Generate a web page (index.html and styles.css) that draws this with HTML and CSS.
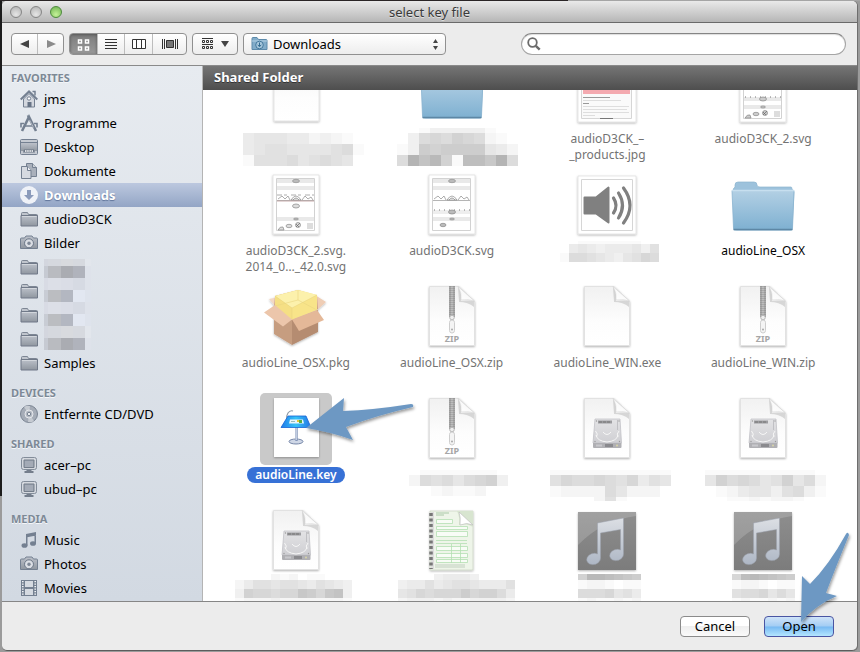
FILE: index.html
```html
<!DOCTYPE html>
<html lang="en">
<head>
<meta charset="utf-8">
<title>select key file</title>
<link rel="stylesheet" href="styles.css">
</head>
<body>
<svg class="defs" aria-hidden="true">
  <defs>
    <linearGradient id="g-page" x1="0" y1="0" x2="0" y2="1"><stop offset="0" stop-color="#f1f1f1"/><stop offset=".6" stop-color="#fdfdfd"/><stop offset="1" stop-color="#fff"/></linearGradient>
    <linearGradient id="g-fold" x1="0" y1="1" x2="1" y2="0"><stop offset="0" stop-color="#fff"/><stop offset=".45" stop-color="#fafafa"/><stop offset="1" stop-color="#ddd"/></linearGradient>
    <linearGradient id="g-folder" x1="0" y1="0" x2="0" y2="1"><stop offset="0" stop-color="#b3d0e4"/><stop offset="1" stop-color="#7eb0d1"/></linearGradient>
    <linearGradient id="g-side" x1="0" y1="0" x2="0" y2="1"><stop offset="0" stop-color="#bcc1ca"/><stop offset="1" stop-color="#8f969f"/></linearGradient>
    <linearGradient id="g-music" x1="0" y1="0" x2="0" y2="1"><stop offset="0" stop-color="#8e8e8e"/><stop offset="1" stop-color="#7c7c7c"/></linearGradient>
    <linearGradient id="g-note" x1="0" y1="0" x2="0" y2="1"><stop offset="0" stop-color="#dcdfe4"/><stop offset="1" stop-color="#aeb7c5"/></linearGradient>
    <linearGradient id="g-drive" x1="0" y1="0" x2="0" y2="1"><stop offset="0" stop-color="#e3e3e5"/><stop offset="1" stop-color="#cfcfd3"/></linearGradient>
    <linearGradient id="g-podium" x1="0" y1="0" x2="1" y2="0"><stop offset="0" stop-color="#1f7bea"/><stop offset=".5" stop-color="#35c3f8"/><stop offset="1" stop-color="#2274e4"/></linearGradient>
    <filter id="shadow" x="-20%" y="-20%" width="140%" height="150%"><feDropShadow dx="0" dy="1" stdDeviation="1" flood-opacity=".3"/></filter>
    <filter id="arrow-shadow" x="-20%" y="-20%" width="140%" height="150%"><feDropShadow dx="1" dy="2" stdDeviation="1.5" flood-opacity=".4"/></filter>
  </defs>

  <symbol id="page" viewBox="0 0 72 72">
    <path d="M13.500 5.500H43L58.500 20V64.500H13.500Z" fill="url(#g-page)" stroke="#e2e2e2" filter="url(#shadow)"/>
    <path d="M42 6q4 6 3 14 8-1 13 0v6q-6-5-15-5Z" fill="#000" opacity=".13"/>
    <path d="M42 5.500q4 6 3 13.500 8-1 13.500 1Z" fill="url(#g-fold)" stroke="#d2d2d2" stroke-width=".6"/>
  </symbol>
  <symbol id="zip" viewBox="0 0 72 72">
    <use href="#page"/>
    <path d="M33 5h6v31h-6Z" fill="#a9a9a9"/>
    <path d="M34 5v31M38 5v31" stroke="#8c8c8c" stroke-dasharray="1 1"/>
    <path d="M36 6v30" stroke="#d0d0d0" stroke-dasharray="1 1"/>
    <circle cx="36" cy="36.500" r="2.300" fill="#eee" stroke="#b4b4b4"/>
    <rect x="33.500" y="39" width="5" height="13" rx="2.500" fill="#f4f4f4" stroke="#cdcdcd"/>
    <circle cx="36" cy="48.500" r="1" fill="#aaa"/>
  </symbol>
  <symbol id="drive" viewBox="0 0 72 72">
    <use href="#page"/>
    <path d="M24 26h25l1.500 24H22Z" fill="url(#g-drive)" stroke="#c2c2c6" stroke-width=".8"/>
    <path d="M22 50h28.500v4q0 1-1 1h-26.500q-1 0-1-1Z" fill="#b0b0b4"/>
    <rect x="27" y="27.500" width="14" height="3" fill="#9c9c9f"/><path d="M28 29h12" stroke="#777" stroke-dasharray="3 1"/>
    <path d="M25 42q1 6 11 7 10-1 11-7M24.500 38q3 3 1 6M48 38q-3 3-1 6M32 39q4 5 8 0" fill="none" stroke="#f6f6f6" stroke-width="1"/>
    <path d="M46.500 27v10" stroke="#c0c0c4"/>
    <path d="M25 51.500h6v2h-6Z" fill="#c8c8cc"/><path d="M34 51h8v3h-8Z" fill="#8a8a8e"/><circle cx="46" cy="52.500" r="1" fill="#d8d5a8"/>
    <g fill="#999"><circle cx="25.500" cy="28" r=".7"/><circle cx="48" cy="28" r=".7"/><circle cx="24" cy="48.500" r=".7"/><circle cx="48.500" cy="48.500" r=".7"/></g>
  </symbol>
  <symbol id="folder" viewBox="0 0 72 72">
    <path d="M7 61V22Q5 20 8 18V16q0-3 3-3h16q3 0 3 3 0 2 3 2h31q1 0 1 2l2 3-2 38Z" fill="#9dc2dc" stroke="#8db4cf" stroke-width=".7"/>
    <path d="M5 21.500h62L65.500 59q0 2-2 2h-54q-3 0-3-2Z" fill="url(#g-folder)" stroke="#8ab4d0" stroke-width=".8"/>
    <path d="M5 21.500h62" stroke="#c7dfef" stroke-width="1.500"/>
    <path d="M6.500 60.500h59" stroke="#5d87a5" stroke-width="1.500"/>
  </symbol>
  <symbol id="sheet" viewBox="0 0 72 72">
    <path d="M13 6h46v59H13Z" fill="#fff" stroke="#ddd" stroke-width=".7" filter="url(#shadow)"/>
    <path d="M16.500 9.500h38v52h-38Z" fill="#fff" stroke="#d2d2d2"/>
    <path d="M17 10h37v4H17ZM17 17h37v4H17ZM17 48h37v4H17Z" fill="#e9e9e9"/>
    <g fill="#bbb" stroke="#888" stroke-width=".6"><ellipse cx="36" cy="12" rx="3.500" ry="1.700"/><ellipse cx="36" cy="50" rx="2.500" ry="1"/></g>
    <path d="M17 31.500h37" stroke="#b5b5b5"/>
    <path d="M18 30l4-3 3 3 3-3 2 4M31 31q5-8 10 0ZM42 31l3-4 3 3 3-2 2 3" fill="none" stroke="#8a8a8a" stroke-width=".7"/>
    <path d="M33 31q3-4 6 0" stroke="#999" fill="none"/>
  </symbol>
  <symbol id="sheet-a" viewBox="0 0 72 72">
    <use href="#sheet"/>
    <path d="M17 26h37" stroke="#999" stroke-width=".8" stroke-dasharray="5 2 3 4"/><path d="M17 32h37" stroke="#b99" stroke-width=".8"/>
    <g fill="#ddd" stroke="#888" stroke-width=".7"><ellipse cx="36" cy="37" rx="3.500" ry="2"/><ellipse cx="29" cy="57" rx="3" ry="1.700"/><circle cx="38" cy="56" r="2.500"/><path d="M18 61q2-4 5-3l1 3Z"/></g>
    <path d="m36 58 4-4M36 55l3 3" stroke="#666" stroke-width=".7"/><path d="M47 54h6v6h-6Z" fill="#ddd"/>
  </symbol>
  <symbol id="sheet-b" viewBox="0 0 72 72">
    <use href="#sheet"/>
    <path d="M17 41h37v4H17Z" fill="#eee"/><path d="M18 41h36" stroke="#777" stroke-dasharray="1 4"/>
    <g fill="#bbb" stroke="#888" stroke-width=".7"><ellipse cx="36" cy="43" rx="3.500" ry="2"/><ellipse cx="27" cy="56" rx="3" ry="1.700"/></g>
  </symbol>
  <symbol id="sheet-c" viewBox="0 0 72 72">
    <path d="M13 6h46v59H13Z" fill="#fff" stroke="#ddd" stroke-width=".7" filter="url(#shadow)"/>
    <path d="M16.500 9.500h38v52h-38Z" fill="#fff" stroke="#d2d2d2"/>
    <path d="M17 40h37v4H17ZM17 48h37v4H17Z" fill="#e9e9e9"/><path d="M18 40h36" stroke="#777" stroke-dasharray="1 4"/>
    <g fill="#ccc" stroke="#888" stroke-width=".7"><ellipse cx="36" cy="42" rx="3.500" ry="2"/><ellipse cx="36" cy="50" rx="2.500" ry="1"/><ellipse cx="29" cy="57" rx="3" ry="1.700"/><circle cx="38" cy="56" r="2.500"/><path d="M18 61q2-4 5-3l1 3Z"/></g>
    <path d="m36 58 4-4M36 55l3 3" stroke="#666" stroke-width=".7"/><path d="M47 54h6v6h-6Z" fill="#ddd"/>
  </symbol>
  <symbol id="music" viewBox="0 0 72 72">
    <path d="M7 7h58v58H7Z" fill="url(#g-music)" filter="url(#shadow)"/>
    <path d="M7 7h58v4Q30 16 7 40Z" fill="#fff" opacity=".17"/>
    <path d="M26.500 18 52.500 13v36a7 5.500 -15 1 1-3-4V24.500L29.500 28v25a7 5.500 -15 1 1-3-4Z" fill="url(#g-note)" stroke="#9aa1ac" stroke-width=".5"/>
  </symbol>

  <symbol id="s-folder" viewBox="0 0 18 18"><path d="M1.500 15.500v-12q0-1 1-1h5l1 2h8q1 0 1 1v10Z" fill="#c0c5cd" stroke="#7d8694"/><path d="M1 5.500h16.500v10.500H1Z" fill="url(#g-side)" stroke="#707988"/><path d="M2 6.500h14.500" stroke="#d2d6dc"/></symbol>
  <symbol id="s-camera" viewBox="0 0 18 18"><path d="M.5 5q0-1 1-1h3L6 2h6l1.500 2h3q1 0 1 1v9.500h-17Z" fill="url(#g-side)" stroke="#748091"/><circle cx="9" cy="9.300" r="4.500" fill="#d8dce3" stroke="#6c7787"/><circle cx="9" cy="9.300" r="2.200" fill="#7d8796" stroke="#fff" stroke-width=".6"/></symbol>
  <symbol id="s-pc" viewBox="0 0 18 18"><rect x="1.500" y="1.500" width="15" height="12" rx="2" fill="#d4d8de" stroke="#828c99"/><path d="M4 4h10v7.500H4Z" fill="#98a0ac" stroke="#747e8b"/><path d="M5 6h8M5 8h8M5 10h8" stroke="#b9bfc8" stroke-width=".7"/><path d="M7 14h4l1 1h1.500v2h-9v-2H6Z" fill="#747e8c"/></symbol>
</svg>

<div class="window">
  <header class="titlebar">
    <div class="lights">
      <button class="light" type="button" aria-label="Close"></button>
      <button class="light" type="button" aria-label="Minimize"></button>
      <button class="light light-zoom" type="button" aria-label="Zoom"></button>
    </div>
    <h1 class="title">select key file</h1>
  </header>

  <div class="toolbar">
    <div class="group nav-group">
      <button type="button" aria-label="Back"><svg width="10" height="10"><path d="M9 1v8L0 5Z" fill="#444"/></svg></button>
      <button type="button" aria-label="Forward"><svg width="10" height="10"><path d="M1 1v8l9-4Z" fill="#8b8b8b"/></svg></button>
    </div>
    <div class="group view-group">
      <button class="active" type="button" aria-label="Icons"><svg width="13" height="13" fill="none" stroke="#fff" stroke-width="1.500"><path d="M1.500 2h3v3h-3ZM8.500 2h3v3h-3ZM1.500 9h3v3h-3ZM8.500 9h3v3h-3Z"/></svg></button>
      <button type="button" aria-label="List"><svg width="12" height="12" stroke="#333"><path d="M0 1.500h12M0 4.500h12M0 7.500h12M0 10.500h12"/></svg></button>
      <button type="button" aria-label="Columns"><svg width="14" height="12" fill="#fff" stroke="#333"><path d="M.5 1.500h13v9H.5ZM4.500 1v10M9.500 1v10"/></svg></button>
      <button class="wide" type="button" aria-label="Cover flow"><svg width="16" height="12" stroke="#333"><path d="M.5 1v10M2.500 1v10M13.500 1v10M15.500 1v10"/><path d="M4.500 2.500h7v7h-7Z" fill="#777"/></svg></button>
    </div>
    <button class="group action" type="button" aria-label="Arrange"><svg width="12" height="12" fill="none" stroke="#333"><path d="M.5 2.500h2v2h-2ZM4.500 2.500h2v2h-2ZM8.500 2.500h2v2h-2ZM.5 8.500h2v2h-2ZM4.500 8.500h2v2h-2ZM8.500 8.500h2v2h-2ZM0 .5h11M0 6.500h11"/></svg><svg width="8" height="6"><path d="M0 0h8L4 6Z" fill="#444"/></svg></button>
    <div class="group location">
      <svg width="17" height="16" aria-hidden="true"><path d="M1 13.500v-11q0-1 1-1h4l1.500 2H15q1 0 1 1v9Z" fill="#82acc9" stroke="#5c8aab"/><path d="M1 5h15" stroke="#b5d2e5"/><circle cx="8.500" cy="9" r="3.800" fill="#a8c8dd" stroke="#44789c"/><path d="M8.500 6.500v3.500M6.800 8.800l1.700 2 1.700-2" stroke="#326b91" fill="none"/></svg>
      <select aria-label="Location"><option>Downloads</option></select>
      <svg class="stepper" width="5" height="11" aria-hidden="true"><path d="M2.500 0 5 4H0ZM0 7h5l-2.500 4Z" fill="#444"/></svg>
    </div>
    <label class="search">
      <svg width="14" height="14" fill="none" stroke="#6b6b6b" aria-hidden="true"><circle cx="5.500" cy="5.500" r="4.300" stroke-width="1.800"/><path d="m8.800 8.800 3.900 3.900" stroke-width="2.400"/></svg>
      <input type="search" aria-label="Search">
    </label>
  </div>

  <div class="main">
    <nav class="sidebar" aria-label="Places">
      <h2>FAVORITES</h2>
      <ul>
        <li><a href="#"><svg viewBox="0 0 18 18"><path d="M3.500 9v8h11V9L9 3.500Z" fill="#d3d7de" stroke="#748091"/><path d="M.7 9.500 9 1.500l8.300 8" fill="none" stroke="#748091" stroke-width="2"/><path d="M12.500 1.500h2.500v4" fill="none" stroke="#748091" stroke-width="1.500"/><path d="M7.500 12h4v5h-4Z" fill="#667385"/><circle cx="9" cy="8.500" r="1.700" fill="#fff" stroke="#748091"/></svg>jms</a></li>
        <li><a href="#"><svg viewBox="0 0 18 18" fill="none" stroke="#748091"><path d="m2 17 7-14 7 14" stroke-width="2.600"/><path d="M1 13.500V9.500h3M17 13.500V9.500h-3M5 12h8" stroke-width="1.600"/><path d="M7.500 1.500 14 14" stroke-width="1.600"/><path d="m9.500 6 4 7.500" stroke="#b4bac4" stroke-width="1"/></svg>Programme</a></li>
        <li><a href="#"><svg viewBox="0 0 18 18"><rect x=".5" y="1.500" width="17" height="15" rx="1" fill="#c5cad2" stroke="#748091"/><path d="M1 4.500h16" stroke="#748091"/><path d="M1 5h16v8H1Z" fill="url(#g-side)"/><path d="M3 14.500 4 11.500h10l1 3Z" fill="#6c7786"/><path d="M5 13h8" stroke="#fff" stroke-width="1.500" stroke-dasharray="1.500 .7"/></svg>Desktop</a></li>
        <li><a href="#"><svg viewBox="0 0 18 18" stroke="#748091"><path d="M6.500 1.500h6l4 4v9h-10Z" fill="#a9b0bb"/><path d="M12.500 1.500v4h4" fill="#ccd1d8"/><path d="M1.500 4.500h6l3.500 4v8h-9.500Z" fill="#d6dae1"/><path d="M7.500 4.500v4h3.500" fill="#eef0f3"/></svg>Dokumente</a></li>
        <li><a class="current" href="#" aria-current="page"><svg viewBox="0 0 18 18"><circle cx="9" cy="9" r="9" fill="#eff2f8"/><path d="M7 4h4v5h3l-5 5-5-5h3Z" fill="#8b9bbb"/></svg>Downloads</a></li>
        <li><a href="#"><svg><use href="#s-folder"/></svg>audioD3CK</a></li>
        <li><a href="#"><svg><use href="#s-camera"/></svg>Bilder</a></li>
        <li><a href="#" aria-label="Folder"><svg><use href="#s-folder"/></svg><svg class="mosaic-side" data-place="0 4"></svg></a></li>
        <li><a href="#" aria-label="Folder"><svg><use href="#s-folder"/></svg><svg class="mosaic-side" data-place="1 -1"></svg></a></li>
        <li><a href="#" aria-label="Folder"><svg><use href="#s-folder"/></svg><svg class="mosaic-side" data-place="1 -1"></svg></a></li>
        <li><a href="#" aria-label="Folder"><svg><use href="#s-folder"/></svg><svg class="mosaic-side" data-place="0 -1"></svg></a></li>
        <li><a href="#"><svg><use href="#s-folder"/></svg>Samples</a></li>
      </ul>
      <h2>DEVICES</h2>
      <ul>
        <li><a href="#"><svg viewBox="0 0 18 18"><circle cx="9" cy="9" r="8.500" fill="#a5acb7" stroke="#7a8492"/><path d="M9 9 4 2a8 8 0 0 1 6-1ZM9 9l5 7a8 8 0 0 1-6 1Z" fill="#c6cbd2"/><circle cx="9" cy="9" r="4" fill="#b5bbc4" stroke="#e6e8ec"/><circle cx="9" cy="9" r="1.700" fill="#e8ebef" stroke="#7a8492"/></svg>Entfernte CD/DVD</a></li>
      </ul>
      <h2>SHARED</h2>
      <ul>
        <li><a href="#"><svg><use href="#s-pc"/></svg>acer–pc</a></li>
        <li><a href="#"><svg><use href="#s-pc"/></svg>ubud–pc</a></li>
      </ul>
      <h2>MEDIA</h2>
      <ul>
        <li><a href="#"><svg viewBox="0 0 18 18" fill="#748091"><path d="M6 3 16 1v3.500L6 6.500ZM6 3h1.500v11.500H6ZM14.500 2H16v10.500h-1.500Z"/><ellipse cx="4.500" cy="14.500" rx="3" ry="2.300"/><ellipse cx="13" cy="12.500" rx="3" ry="2.300"/></svg>Music</a></li>
        <li><a href="#"><svg><use href="#s-camera"/></svg>Photos</a></li>
        <li><a href="#"><svg viewBox="0 0 18 18"><path d="M1 1h16v16H1Z" fill="#748091"/><path d="M5 2h8v6H5ZM5 10h8v6H5Z" fill="#d5dae1"/><path d="M2.800 2v15M15.200 2v15" stroke="#f2f4f7" stroke-width="1.600" stroke-dasharray="1.300 1.200"/></svg>Movies</a></li>
      </ul>
    </nav>

    <section class="browser">
      <h2 class="folder-bar">Shared Folder</h2>
      <div class="scroller">
        <ul class="files">
          <li><svg class="icon" viewBox="0 0 72 72"><path d="M14 5h45v59H14Z" fill="url(#g-page)" stroke="#ddd" stroke-width=".7" filter="url(#shadow)"/></svg><svg class="mosaic" data-mosaic="25 -3 11 5 ...fffff...|25 2 11 11 baaabbdcde/ba99aaaa98e/e9998a989a"></svg></li>
          <li><svg class="icon"><use href="#folder"/></svg><svg class="mosaic" data-mosaic="23 -3 11 5 ..eccccce..|23 2 11 11 .c878678de./ec565555abd/80316e22408"></svg></li>
          <li><svg class="icon" viewBox="0 0 72 72"><path d="M7 7h58v58H7Z" fill="#fff" stroke="#ddd" stroke-width=".7" filter="url(#shadow)"/><path d="M10.500 9.500h50v52h-50Z" fill="#fafafa" stroke="#d6d6d6"/><path d="M12 11h47v26H12Z" fill="#f4aab0"/><path d="M12 40.500h27M12 46.500h6" stroke="#999"/><path d="M12 43.500h38M12 49.500h46M12 52.500h44M12 55.500h46M12 58.500h12" stroke="#dedede"/><path d="M29 61.500h13" stroke="#777"/></svg><span class="name">audioD3CK_–<br>_products.jpg</span></li>
          <li><svg class="icon"><use href="#sheet-c"/></svg><span class="name">audioD3CK_2.svg</span></li>

          <li><svg class="icon"><use href="#sheet-a"/></svg><span class="name">audioD3CK_2.svg.<br>2014_0…_42.0.svg</span></li>
          <li><svg class="icon"><use href="#sheet-b"/></svg><span class="name">audioD3CK.svg</span></li>
          <li><svg class="icon" viewBox="0 0 72 72"><path d="M7 7h58v58H7Z" fill="#fff" stroke="#ddd" stroke-width=".7" filter="url(#shadow)"/><path d="M10.500 10.500h51v51h-51Z" fill="#fff" stroke="#d6d6d6"/><path d="M13.500 28.500H25L37.500 18.500v35L25 44.500H13.500Z" fill="#808080" stroke="#808080" stroke-width="2" stroke-linejoin="round"/><path d="M42.500 29q5 7.500 0 15M47.500 24q8 12.500 0 25M52.500 19q13 17.500 0 35" fill="none" stroke="#808080" stroke-width="3.200" stroke-linecap="round"/></svg><svg class="mosaic" data-mosaic="31 -2 9 3 ..eeeeeee..|31 1 9 9 .babcbbbac9/e889abca978"></svg></li>
          <li class="open"><svg class="icon"><use href="#folder"/></svg><span class="name">audioLine_OSX</span></li>

          <li><svg class="icon" viewBox="0 0 72 72"><g filter="url(#shadow)"><path d="M9 18 24 15 15 25Z" fill="#f3d8c4"/><path d="m55 14 11 7-9 8Z" fill="#efcdb5"/><path d="M14 26 32 38 58 28 57 15 38 9 15 15Z" fill="#cda386"/><path d="M14 28 32 39v25L14 53Z" fill="#c69d80"/><path d="M32 39 58 29v22L32 64Z" fill="#b58c71"/></g><path d="M15 15 38 9l19 5v15L32 39 15 25Z" fill="#f8e489"/><path d="M15 15 38 9l19 5-25 13Z" fill="#fcf1ac"/><path d="M32 27v12L15 25V15Z" fill="#f5df84"/><path d="M15 25 38 19l19 10M38 9v10M32 27v12M15 15l17 12 25-13" fill="none" stroke="#ead57f" stroke-width=".6"/><path d="m15 24 17 14.500-9 7L4 31.500Z" fill="#ecc6ab"/><path d="m32 38.500 25-9.500 7 10-25 11Z" fill="#e4b898"/></svg><span class="name">audioLine_OSX.pkg</span></li>
          <li><svg class="icon" viewBox="0 0 72 72"><use href="#zip"/><text class="zip-text" x="36" y="61">ZIP</text></svg><span class="name">audioLine_OSX.zip</span></li>
          <li><svg class="icon"><use href="#page"/></svg><span class="name">audioLine_WIN.exe</span></li>
          <li><svg class="icon" viewBox="0 0 72 72"><use href="#zip"/><text class="zip-text" x="36" y="61">ZIP</text></svg><span class="name">audioLine_WIN.zip</span></li>

          <li class="selected" aria-current="true">
            <div class="frame">
              <svg class="icon" viewBox="0 0 72 72"><path d="M14 5h45v59H14Z" fill="#fff" filter="url(#shadow)"/><path d="M27 26q-1-3 1-6 2-3 5-2" fill="none" stroke="#8d98a5" stroke-width="1.200"/><ellipse cx="36" cy="48.500" rx="7" ry="2.500" fill="#cfd7e6" stroke="#7687a8"/><path d="M36.500 34v14" stroke="#8395b8" stroke-width="2.400"/><path d="M36.200 34v13" stroke="#e0e7f4"/><path d="M28 23h18l5 11.500H21Z" fill="url(#g-podium)" stroke="#1563d4" stroke-width=".8"/><path d="M30 26.500h13l1 4H29Z" fill="#e6f5fc"/><path d="M31 28.500h4" stroke="#9bb"/><path d="M37 27h2v2h-2Z" fill="#e8c834"/><path d="M39 27h3v3h-3Z" fill="#54ad48"/></svg>
              <svg class="arrow arrow-key" viewBox="0 0 112 60" aria-hidden="true"><path d="M5 30 43 0 42 13Q72 12 110 6q3 0 2 3Q77 17 45 29l7 13Q30 34 5 30Z" fill="#6d98c3" filter="url(#arrow-shadow)"/></svg>
            </div>
            <span class="name">audioLine.key</span>
          </li>
          <li><svg class="icon" viewBox="0 0 72 72"><use href="#zip"/><text class="zip-text" x="36" y="61">ZIP</text></svg><svg class="mosaic" data-mosaic="35 3 11 5 .eeeeeee.|35 8 11 11 d898a876c|35 19 11 10 .fedeedf."></svg></li>
          <li><svg class="icon"><use href="#drive"/></svg><svg class="mosaic" data-mosaic="21 3 11 5 eeeeeeeeeee|21 8 11 11 97887897b9a/edddd8adddf|21 30 11 4 ....d9e...."></svg></li>
          <li><svg class="icon"><use href="#drive"/></svg><svg class="mosaic" data-mosaic="20 3 11 5 eeeeeeeeee.|20 8 11 11 a6878a96a8d/.edbaac98ce|20 30 11 4 ..eededde.."></svg></li>

          <li><svg class="icon"><use href="#drive"/></svg><svg class="mosaic" data-mosaic="17 -5 9 6 ....ded.ee...|17 1 9 9 db99a99ab9abc/c67787745743c|17 19 9 3 edddcddddddde"></svg></li>
          <li><svg class="icon" viewBox="0 0 72 72"><path d="M14 6h43v59H14Z" fill="#eef5e9" stroke="#c9d2c3" stroke-width=".7" filter="url(#shadow)"/><path d="M15 7h3v57h-3Z" fill="#ddd"/><path d="M15 8v56" stroke="#777" stroke-width="3.500" stroke-dasharray="3 2.500"/><path d="M20 8h13M20 10h8" stroke="#a9c8a7"/><g fill="#f8fcf6" stroke="#b4dfb2" stroke-width=".8"><path d="M20.500 14.500h16v4h-16ZM20.500 21.500h31v3h-31ZM20.500 26.500h31v5h-31ZM20.500 41.500h31v4h-31ZM20.500 48.500h31v4h-31ZM20.500 54.500h31v3h-31ZM35.500 39v19M44.500 39v19M20 35.500h31M20 38.500h31"/></g><path d="M19 60h30M19 62h30" stroke="#c1cfbf"/><path d="M44 7h9v3h-9Z" fill="#9ed89b"/><path d="M41 6q3 6 2 14 8-2 14 2V6Z" fill="#d8e5d0"/><path d="M43 7q2 6 1 13 7-3 13 0Z" fill="#fff" stroke="#bbb" stroke-width=".6"/></svg><svg class="mosaic" data-mosaic="24 -5 9 6 ....cbbbc....|24 1 9 9 cbb9ba99abbb9/a97877757668b|24 19 9 3 dcccdcddccccd"></svg></li>
          <li><svg class="icon"><use href="#music"/></svg><svg class="mosaic" data-mosaic="49 -5 9 6 6112345|49 1 9 9 eddefee/8887a9b|49 19 9 3 edeeded"></svg></li>
          <li><svg class="icon"><use href="#music"/></svg><svg class="mosaic" data-mosaic="47 -5 9 6 7212345|47 1 9 9 eddefee/9887a8a|47 19 9 3 edeeded"></svg></li>
        </ul>
      </div>
    </section>
  </div>

  <footer class="footer">
    <button class="push" type="button">Cancel</button>
    <div class="frame">
      <button class="push default" type="button">Open</button>
      <svg class="arrow arrow-open" viewBox="0 0 60 96" aria-hidden="true"><path d="M6 91 7 45l8 8Q34 34 51 3q2-3 3 1Q40 38 31 62l11 3Q22 73 6 91Z" fill="#6d98c3" filter="url(#arrow-shadow)"/></svg>
    </div>
  </footer>
</div>
<script src="mosaic.js"></script>
</body>
</html>
```
FILE: styles.css
```css
* { box-sizing: border-box; }

body {
  margin: 0;
  height: 100vh;
  padding: 1px 3px 1px 2px;
  background:
    linear-gradient(90deg, #2a2526 66%, #a5a5a5 66%) top / 100% 1px no-repeat,
    linear-gradient(#1c1c1c 76%, #9b9b9b 76%) left / 2px 100% no-repeat,
    #9b9b9b;
  font-family: "Noto Sans", "Open Sans", sans-serif;
  font-size: 13px;
  color: #000;
  overflow: hidden;
}

h1, h2, ul { margin: 0; padding: 0; font-weight: normal; list-style: none; }
button, input, select { font: inherit; color: inherit; margin: 0; padding: 0; border: 0; background: none; }
svg { display: block; flex: none; }
.defs { position: absolute; width: 0; height: 0; }

.window {
  display: flex;
  flex-direction: column;
  height: 100%;
  background: #ececec;
  border-radius: 5px;
  border-bottom: 1px solid #5c5c5c;
  box-shadow: 1px 0 #6e6e6e;
  overflow: hidden;
}

.titlebar {
  display: grid;
  grid-template-columns: 1fr auto 1fr;
  align-items: center;
  height: 22px;
  flex: none;
  padding: 0 8px;
  background: linear-gradient(#e9e9e9, #b6b6b6);
  border-bottom: 1px solid #6a6a6a;
}
.lights { display: flex; gap: 8px; }
.light {
  width: 12px;
  height: 12px;
  border: 1px solid #858585;
  border-radius: 50%;
  background: radial-gradient(circle at 50% 75%, #e6e6e6, #b0b0b0);
}
.light-zoom { border-color: #4d8a3c; background: radial-gradient(circle at 50% 75%, #c5f298, #6cb24f); }
.title { font-size: 13px; line-height: 20px; color: #3a3a3a; text-shadow: 0 1px rgba(255, 255, 255, .5); }

.toolbar {
  display: flex;
  align-items: flex-start;
  gap: 5px;
  height: 43px;
  flex: none;
  padding: 10px 11px 0 9px;
  border-bottom: 1px solid #8a8a8a;
}
.group {
  display: flex;
  align-items: center;
  height: 22px;
  border: 1px solid #909090;
  border-radius: 4px;
  background: linear-gradient(#fff, #ededed);
  overflow: hidden;
}
.group button { display: flex; align-items: center; justify-content: center; flex: 1; height: 20px; }
.group button + button { border-left: 1px solid #bdbdbd; }
.nav-group { width: 53px; }
.view-group { width: 118px; }
.view-group .wide { flex: none; width: 34px; }
.view-group .active { background: linear-gradient(#7c7c7c, #999); box-shadow: inset 0 1px 3px #555; }
.action { width: 46px; justify-content: center; gap: 7px; }
.location { width: 203px; padding: 0 7px; gap: 5px; }
.location select { flex: 1; min-width: 0; height: 20px; appearance: none; outline: none; }
.search {
  display: flex;
  align-items: center;
  gap: 5px;
  width: 325px;
  height: 22px;
  margin-left: auto;
  padding: 0 10px 0 5px;
  border: 1px solid #a5a5a5;
  border-top-color: #858585;
  border-radius: 11px;
  background: #fff;
  box-shadow: inset 0 1px 1px #ddd;
}
.search input { flex: 1; min-width: 0; height: 18px; outline: none; appearance: none; }

.main { display: flex; flex: 1; min-height: 0; }

.sidebar {
  width: 201px;
  flex: none;
  overflow: hidden;
  padding-top: 3px;
  border-right: 1px solid #b4b4b4;
  background: linear-gradient(#e7ebf0, #d2d9e2);
}
.sidebar h2 {
  padding-left: 9px;
  font-size: 11px;
  font-weight: bold;
  line-height: 18px;
  color: #7d8996;
  text-shadow: 0 1px #f5f7f9;
}
.sidebar ul + h2 { margin-top: 9px; }
.sidebar a {
  display: flex;
  align-items: center;
  gap: 6px;
  height: 24px;
  padding-left: 18px;
  color: #000;
  text-decoration: none;
}
.sidebar a svg { width: 18px; height: 18px; }
.sidebar .current {
  color: #fff;
  font-weight: bold;
  background: linear-gradient(#bcc8df, #93a5c5);
  text-shadow: 0 1px 1px #5f7399;
}
.sidebar a .mosaic-side { width: 48px; height: 24px; overflow: visible; }

.browser { display: flex; flex-direction: column; flex: 1; min-width: 0; background: #fff; }
.folder-bar {
  flex: none;
  height: 24px;
  padding-left: 11px;
  background: linear-gradient(#757575, #4e4e4e);
  font-size: 13px;
  font-weight: bold;
  line-height: 23px;
  color: #fff;
  text-shadow: 0 1px #333;
}
.scroller { flex: 1; min-height: 0; overflow: hidden; }

/* The list is shown scrolled down by part of a row. */
.files {
  display: grid;
  grid-template-columns: repeat(4, 1fr);
  grid-auto-rows: 112px;
  margin-top: -33px;
  padding: 0 16px 0 15px;
}
.files li { display: flex; flex-direction: column; align-items: center; gap: 2px; min-width: 0; }
.icon { width: 72px; height: 72px; }
.name { padding: 0 8px; font-size: 12px; line-height: 16px; text-align: center; color: #737373; }
.open .name { color: #000; }
.selected .frame { border-radius: 5px; background: #c9c9c9; }
.selected .name { border-radius: 8px; background: #3771d6; color: #fff; font-weight: 600; }
.mosaic { width: 156px; height: 36px; overflow: visible; }
.zip-text { font: bold 9px "Noto Sans", sans-serif; fill: #a6a6a6; text-anchor: middle; }

.frame { position: relative; }
.arrow { position: absolute; z-index: 2; overflow: visible; pointer-events: none; }
.arrow-key { left: 41px; top: 5px; width: 112px; height: 60px; }
.arrow-open { left: 31px; top: -85px; width: 60px; height: 96px; }

.footer {
  display: flex;
  justify-content: flex-end;
  gap: 14px;
  flex: none;
  height: 49px;
  padding: 14px 23px 0 0;
  border-top: 1px solid #868686;
}
.push {
  display: block;
  width: 70px;
  height: 21px;
  border: 1px solid #8b8b8b;
  border-radius: 4px;
  background: linear-gradient(#fff 45%, #efefef 50%, #fafafa);
  line-height: 19px;
}
.push.default {
  border-color: #4a55a3;
  background: linear-gradient(#cfe3f8, #a3cdf4 48%, #77b9f2 52%, #b4e6ff);
}
```
FILE: mosaic.js
```js
// Fills the obscured labels with grids of flat blocks.
const NS = 'http://www.w3.org/2000/svg';

function block(svg, x, y, w, h, fill) {
  const r = document.createElementNS(NS, 'rect');
  Object.entries({ x, y, width: w, height: h, fill, 'shape-rendering': 'crispEdges' })
    .forEach(([k, v]) => r.setAttribute(k, v));
  svg.append(r);
}

// Each band reads "x y cellWidth cellHeight rows"; a digit is a grey level, a dot is empty.
document.querySelectorAll('[data-mosaic]').forEach(svg => {
  svg.dataset.mosaic.split('|').forEach(band => {
    const [x, y, w, h, rows] = band.split(' ');
    rows.split('/').forEach((row, j) => {
      [...row].forEach((c, i) => {
        if (c === '.') return;
        const g = 255 - (15 - parseInt(c, 16)) * 5;
        block(svg, +x + i * w, +y + j * h, w, h, `rgb(${g},${g},${g})`);
      });
    });
  });
});

const SIDE = [
  { light: ['#d3d6de', '#d5d8de', '#d8dade', '#d6d9df', '#e2e6ec'], dark: ['#c6cad2', '#b9bbc0', '#aaacb2', '#b0b3bc', '#dee2ea'] },
  { light: ['#d8dbe4', '#dcdfe7', '#dadde6', '#d6dae3', '#dee2ea'], dark: ['#c8ccd4', '#bbbdc1', '#b3b7c1', '#e2e7f1', '#dee3ec'] }
];
const EDGES = [0, 4, 17, 29, 41, 47];

document.querySelectorAll('.mosaic-side').forEach(svg => {
  const [kind, top] = svg.dataset.place.split(' ').map(Number);
  for (let i = 0; i < 5; i++) {
    const w = EDGES[i + 1] - EDGES[i];
    block(svg, EDGES[i], top, w, 11 - top, SIDE[kind].light[i]);
    block(svg, EDGES[i], 11, w, 12, SIDE[kind].dark[i]);
  }
});
```
